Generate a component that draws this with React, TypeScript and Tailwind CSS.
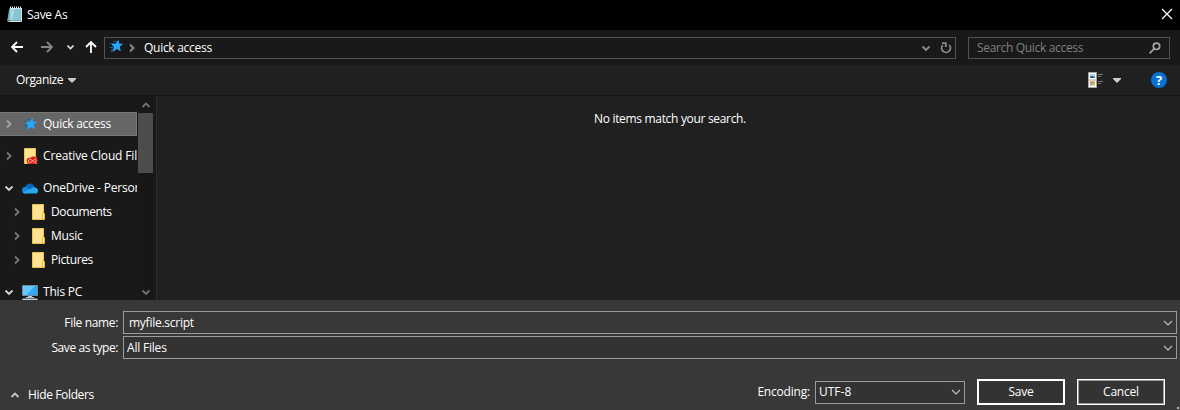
import type { ReactNode } from "react";

type Dir = "up" | "down" | "right";

const chevronPaths: Record<Dir, string> = {
  up: "M1.5 7 5 3.5 8.5 7",
  down: "M1.5 3.5 5 7 8.5 3.5",
  right: "M3 1.5 6.5 5 3 8.5",
};

function Chevron({ dir, color, thin = false }: { dir: Dir; color: string; thin?: boolean }) {
  return (
    <svg width="10" height="10" viewBox="0 0 10 10" fill="none" stroke={color} strokeWidth={thin ? 1.1 : 1.9} className="shrink-0">
      <path d={thin ? "M1 3 5 7 9 3" : chevronPaths[dir]} />
    </svg>
  );
}

function Caret() {
  return (
    <svg width="8" height="5" viewBox="0 0 8 5" className="shrink-0">
      <path d="M0 0H8V1L4 5 0 1Z" fill="#cecece" />
    </svg>
  );
}

function Notepad() {
  return (
    <svg width="16" height="17" viewBox="0 0 16 17" className="shrink-0">
      <path d="M2.2 2.5H14L12 14.5H.3Z" fill="#72adbb" />
      <path d="M3.2 2.5H14.5V14.5H2.8Z" fill="#a3d7e2" />
      <path d="M8 3H14.5V14.5H5Z" fill="#86c4d1" />
      <path d="M.3 14.8 3 15.5H14.5V3" fill="none" stroke="#dce5e7" strokeWidth="1" />
      <path d="M3 1.5H15" stroke="#e9f2f3" strokeWidth="2" strokeDasharray="1 1" />
      <path d="M3 2.5H15" stroke="#cfe3e7" strokeWidth="1" />
    </svg>
  );
}

function QuickStar() {
  return (
    <svg width="16" height="14" viewBox="0 0 16 14" className="shrink-0">
      <path d="M5.5 2.5H9M2 4.5H6M4 6.5H7M1.5 8.5H6M3 10.5H6M2 12.5H5" stroke="#126da5" strokeWidth=".9" />
      <path d="M10.5 .8 11.2 4.6 15.3 5 11.8 7.6 12.7 12.3 8.8 9.9 4.5 13 6.1 8 3.5 5 7.9 4.5Z" fill="#24a8f7" />
    </svg>
  );
}

function Folder({ cloud = false }: { cloud?: boolean }) {
  return (
    <svg width="16" height="16" viewBox="0 0 16 16" className="shrink-0 overflow-visible">
      <path d="M2.5.5H13.5V9.5H14.5V15.5H2.5Z" fill="#ffe292" stroke="#edc34b" />
      <path d="M12.5 15V9.8H14.5V15Z" fill="#ffe9a8" stroke="#e5b330" strokeWidth=".8" />
      {cloud && (
        <g>
          <path d="M4.5 12.5C4.5 10.2 6.8 9.3 8.5 9.8 10 7.4 15.6 8 15.6 12 15.6 14.7 14 16 12 16H7.5C6 16 4.5 14.4 4.5 12.5Z" fill="#e21b1b" />
          <path d="M11.4 13.8 9 11.5C8 10.7 6.2 11.8 6.3 13 6.4 15 9 14.8 10 13.6L11.6 12C12.7 10.8 14.2 11.4 14.2 12.6 14.2 14 12.7 14.6 11.8 14" fill="none" stroke="#ffdcb8" strokeWidth=".8" />
        </g>
      )}
    </svg>
  );
}

function OneDrive() {
  return (
    <svg width="16" height="11" viewBox="0 0 16 11" className="shrink-0">
      <path d="M3.3 4.2C4.5-.8 11-.8 12.7 4L9 7Z" fill="#0a65bc" />
      <path d="M3.8 3.8C1 3.8 0 5.5 0 7.2 0 9.5 1.5 10.6 3.5 10.6L10 7Z" fill="#1288df" />
      <path d="M9 5.8C11 3 16 4.2 16 7.7 16 9.7 14.8 10.6 13 10.6H3.5C2 10.6 1 10 .6 9.2Z" fill="#27a7ed" />
    </svg>
  );
}

function Computer() {
  return (
    <svg width="16" height="16" viewBox="0 0 16 16" className="shrink-0">
      <path d="M.5 1.5H15.5V11.5H.5Z" fill="#2daaf4" stroke="#73889a" />
      <path d="M1 2H13L4 11H1Z" fill="#69c7fb" />
      <path d="M6 12H10V13H12V14H4V13H6Z" fill="#b8c9d5" />
      <path d="M1 14.5H15L16 16H0Z" fill="#c4ced5" />
    </svg>
  );
}

function TreeRow({ icon, label, open = false, child = false, selected = false, tracking = "" }: { icon: ReactNode; label: string; open?: boolean; child?: boolean; selected?: boolean; tracking?: string }) {
  return (
    <div className={`flex h-6 w-[137px] shrink-0 items-center overflow-hidden whitespace-nowrap ${child ? "pl-3" : "pl-1"} ${selected ? "border border-l-0 border-[#777777] bg-[#666666]" : ""}`}>
      <Chevron dir={open ? "down" : "right"} color={open ? "#d0d0d0" : selected ? "#a2a2a2" : "#747474"} />
      <div className="ml-2 flex w-4 justify-center">{icon}</div>
      <span className={`ml-[5px] ${tracking}`}>{label}</span>
    </div>
  );
}

function Combo({ value, className }: { value: string; className: string }) {
  return (
    <div className={`flex h-[23px] items-center justify-between border border-[#9b9b9b] pr-[3px] ${className}`}>
      <span>{value}</span>
      <Chevron dir="down" color="#c4c4c4" thin />
    </div>
  );
}

export default function App() {
  return (
    <div className="flex h-[410px] w-[1180px] flex-col overflow-hidden bg-[#383838] font-['Open_Sans',sans-serif] text-[12px] leading-4 tracking-[-0.2px] text-white">
      <header className="flex h-[30px] shrink-0 items-center bg-black pl-[7px] pr-[7px]">
        <div className="-mt-[2px]"><Notepad /></div>
        <span className="ml-1 tracking-[-0.3px]">Save As</span>
        <svg className="-mt-[2px] ml-auto" width="12" height="12" viewBox="0 0 12 12" stroke="white" strokeWidth="1.2">
          <path d="m1 1 10 10M11 1 1 11" />
        </svg>
      </header>

      <nav className="flex h-[35px] shrink-0 items-center bg-[#191919]">
        <svg className="ml-[11px] -mt-px" width="12" height="12" viewBox="0 0 12 12" fill="none" stroke="white" strokeWidth="1.8">
          <path d="M12 6H1M6 1 1 6l5 5" />
        </svg>
        <svg className="ml-[18px] -mt-px" width="12" height="12" viewBox="0 0 12 12" fill="none" stroke="#868686" strokeWidth="1.8">
          <path d="M0 6H11M6 1l5 5-5 5" />
        </svg>
        <svg className="-mt-[2px] ml-[14px]" width="7" height="6" viewBox="0 0 7 6" fill="none" stroke="#e0e0e0" strokeWidth="1.7">
          <path d="M.5 1.5 3.5 4.5l3-3" />
        </svg>
        <svg className="-mt-px ml-[11px]" width="12" height="12" viewBox="0 0 12 12" fill="none" stroke="white" strokeWidth="1.8">
          <path d="M6 12V1M1 6l5-5 5 5" />
        </svg>
        <div className="ml-[7px] flex h-[22px] w-[852px] items-center border border-[#535353] pl-[3px]">
          <div className="-mt-[3px]"><QuickStar /></div>
          <span className="ml-[3px]"><Chevron dir="right" color="#8a8a8a" /></span>
          <span className="ml-[7px] tracking-[-0.28px]">Quick access</span>
          <span className="ml-auto"><Chevron dir="down" color="#8a8a8a" /></span>
          <div className="ml-1 flex h-5 w-5 items-center justify-center border-l border-[#151515]">
            <svg width="12" height="12" viewBox="0 0 12 12" fill="none" stroke="#8a8a8a" strokeWidth="1.8">
              <path d="M2.8 3A4.4 4.4 0 1 0 9.3 3M2 1.2H5.8V5" />
            </svg>
          </div>
        </div>
        <div className="ml-3 flex h-[22px] w-[202px] items-center justify-between border border-[#535353] pl-2 pr-2 text-[#808080]">
          <span className="tracking-[-0.33px]">Search Quick access</span>
          <svg width="12" height="12" viewBox="0 0 12 12" fill="none" stroke="#a6a6a6" strokeWidth="1.7">
            <circle cx="7.5" cy="4.3" r="3.2" />
            <path d="M5.2 6.7.6 11.3" />
          </svg>
        </div>
      </nav>

      <div className="flex h-[31px] shrink-0 items-center border-b border-[#161616] bg-[#202020] pl-4 pr-[13px]">
        <span className="tracking-[-0.38px]">Organize</span>
        <div className="ml-[5px]"><Caret /></div>
        <svg className="ml-auto" width="16" height="16" viewBox="0 0 16 16">
          <path d="M.5.5H8.5V15.5H.5ZM0 8H9" fill="#fff" stroke="#aaa49c" />
          <path d="M2 2H7V6H2Z" fill="#a9d3f3" />
          <path d="M2 4.5 4 4 7 5V6H2Z" fill="#245986" />
          <path d="M2 9.5H5V11.5H2Z" fill="#e06a38" />
          <path d="M5 9.5H7V11.5H5Z" fill="#72b145" />
          <path d="M2 11.5H4V13.5H2Z" fill="#75abdc" />
          <path d="M4 11.5H7V13.5H4Z" fill="#e7b83e" />
          <path d="M10 2.5H15M10 4.5H13M10 9.5H15M10 11.5H13" stroke="#777" />
        </svg>
        <div className="ml-[9px]"><Caret /></div>
        <div className="ml-[30px] flex size-4 items-center justify-center rounded-full bg-[#0870d1] text-[13px] font-bold leading-4 tracking-normal">?</div>
      </div>

      <main className="flex h-[204px] shrink-0 bg-[#202020]">
        <aside className="flex w-[157px] shrink-0 border-r border-[#2c2c2c] bg-[#191919]">
          <div className="flex w-[138px] flex-col overflow-hidden pt-4">
            <TreeRow icon={<QuickStar />} label="Quick access" selected tracking="tracking-[-0.28px]" />
            <div className="mt-2"><TreeRow icon={<Folder cloud />} label="Creative Cloud Files" tracking="tracking-[-0.16px]" /></div>
            <div className="mt-2"><TreeRow icon={<OneDrive />} label="OneDrive - Personal" open /></div>
            <TreeRow icon={<Folder />} label="Documents" child tracking="tracking-[-0.4px]" />
            <TreeRow icon={<Folder />} label="Music" child />
            <TreeRow icon={<Folder />} label="Pictures" child tracking="tracking-[-0.4px]" />
            <div className="mt-2"><TreeRow icon={<Computer />} label="This PC" open /></div>
          </div>
          <div className="flex w-[15px] flex-col items-center bg-[#171717] pb-[3px] pt-1">
            <Chevron dir="up" color="#707070" />
            <div className="mt-[3px] h-[60px] w-full bg-[#4d4d4d]" />
            <span className="mt-auto"><Chevron dir="down" color="#707070" /></span>
          </div>
        </aside>
        <p className="mt-[15px] flex-1 pl-[3px] text-center tracking-[-0.32px]">No items match your search.</p>
      </main>

      <footer className="relative flex h-[110px] shrink-0 flex-col pt-[11px]">
        <div className="flex items-center">
          <label className="mr-[5px] w-[118px] text-right tracking-[-0.35px]">File name:</label>
          <Combo value="myfile.script" className="w-[1054px] bg-[#383838] pl-[5px] tracking-[-0.26px]" />
        </div>
        <div className="mt-[2px] flex items-center">
          <label className="mr-[5px] w-[118px] text-right tracking-[-0.43px]">Save as type:</label>
          <Combo value="All Files" className="w-[1054px] bg-[#333333] pl-[3px]" />
        </div>
        <div className="mt-5 flex h-[26px] items-center">
          <div className="ml-[10px] mt-[6px] flex items-center gap-2"><Chevron dir="up" color="#c4c4c4" /><span className="tracking-[-0.36px]">Hide Folders</span></div>
          <label className="ml-auto mr-[5px]">Encoding:</label>
          <Combo value="UTF-8" className="w-[150px] bg-[#333333] pl-[3px] tracking-normal" />
          <button className="ml-3 h-[26px] w-[88px] border-2 border-white bg-[#333333]">Save</button>
          <button className="ml-3 mr-[15px] h-[26px] w-[88px] border border-white bg-[#333333] shadow-[inset_0_0_0_1px_#9b9b9b]">Cancel</button>
        </div>
        <div className="absolute bottom-px right-px size-[2px] bg-[#bbbbbb]" />
      </footer>
    </div>
  );
}
